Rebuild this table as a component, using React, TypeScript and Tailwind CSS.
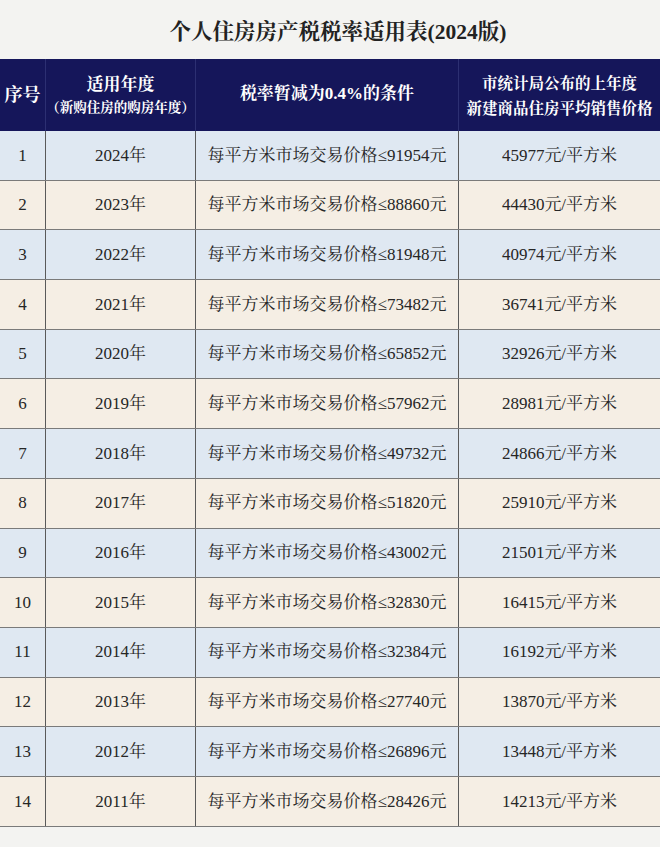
import React from "react";

const rows: [string, string, string, string][] = [
  ["1", "2024年", "91954", "45977"],
  ["2", "2023年", "88860", "44430"],
  ["3", "2022年", "81948", "40974"],
  ["4", "2021年", "73482", "36741"],
  ["5", "2020年", "65852", "32926"],
  ["6", "2019年", "57962", "28981"],
  ["7", "2018年", "49732", "24866"],
  ["8", "2017年", "51820", "25910"],
  ["9", "2016年", "43002", "21501"],
  ["10", "2015年", "32830", "16415"],
  ["11", "2014年", "32384", "16192"],
  ["12", "2013年", "27740", "13870"],
  ["13", "2012年", "26896", "13448"],
  ["14", "2011年", "28426", "14213"],
];

const font = {
  fontFamily:
    '"Liberation Serif", "Noto Serif CJK SC", "Noto Sans CJK SC", serif',
};

export default function App() {
  return (
    <div className="w-[660px] h-[847px] bg-[#f3f3f1] overflow-hidden" style={font}>
      <div className="h-[59px] flex items-center justify-center pt-[6px] pl-[16px]">
        <h1 className="text-[21.5px] font-bold text-[#222]">
          个人住房房产税税率适用表(2024版)
        </h1>
      </div>
      <div className="grid grid-cols-[46px_150px_263px_201px] h-[72px] bg-[#15165a] text-white font-bold">
        <div className="flex items-center justify-center border-r border-[#2c2f72] text-[18px]">
          序号
        </div>
        <div className="flex flex-col items-center justify-center border-r border-[#2c2f72] pt-[2px]">
          <div className="text-[17px] leading-[24px]">适用年度</div>
          <div className="text-[13.5px] leading-[22px]">（新购住房的购房年度）</div>
        </div>
        <div className="flex items-center justify-center border-r border-[#2c2f72] text-[17px] pb-[2px]">
          税率暂减为0.4%的条件
        </div>
        <div className="flex flex-col items-center justify-center text-[15.5px] leading-[25px] pt-[1px]">
          <div>市统计局公布的上年度</div>
          <div>新建商品住房平均销售价格</div>
        </div>
      </div>
      {rows.map((r, i) => (
        <div
          key={r[0]}
          className={`grid grid-cols-[46px_150px_263px_201px] h-[49.7px] border-b border-[#7a7a7a] text-[17px] text-[#262626] ${
            i % 2 === 0 ? "bg-[#dfe8f2]" : "bg-[#f5eee4]"
          }`}
        >
          <div className="flex items-center justify-center border-r border-[#5a5a5a]">
            {r[0]}
          </div>
          <div className="flex items-center justify-center border-r border-[#5a5a5a]">
            {r[1]}
          </div>
          <div className="flex items-center justify-center border-r border-[#5a5a5a]">
            每平方米市场交易价格≤{r[2]}元
          </div>
          <div className="flex items-center justify-center">
            {r[3]}元/平方米
          </div>
        </div>
      ))}
    </div>
  );
}
